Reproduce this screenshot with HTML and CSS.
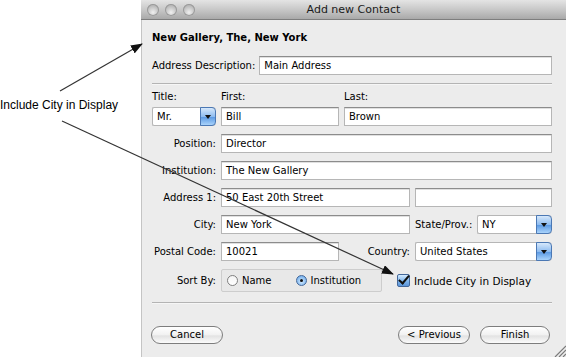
FILE: index.html
```html
<!DOCTYPE html>
<html lang="en">
<head>
  <meta charset="UTF-8">
  <title>Add new Contact</title>
  <link rel="stylesheet" href="styles.css">
</head>
<body>
  <div class="page">
    <aside class="note">Include City in Display</aside>

    <div class="window">
      <div class="titlebar">
        <div class="lights"><i></i><i></i><i></i></div>
        <div class="title">Add new Contact</div>
      </div>

      <div class="content">
        <h1>New Gallery, The, New York</h1>

        <div class="desc-row">
          <span class="lbl">Address Description:</span>
          <div class="field grow">Main Address</div>
        </div>

        <div class="sep"></div>

        <div class="grid heads">
          <span>Title:</span>
          <span>First:</span>
          <span>Last:</span>
        </div>

        <div class="grid rows">
          <div class="popup"><span>Mr.</span><b></b></div>
          <div class="field">Bill</div>
          <div class="field span-3">Brown</div>

          <span class="lbl">Position:</span>
          <div class="field span-4">Director</div>

          <span class="lbl">Institution:</span>
          <div class="field span-4">The New Gallery</div>

          <span class="lbl">Address 1:</span>
          <div class="field span-2">50 East 20th Street</div>
          <div class="field span-2"></div>

          <span class="lbl">City:</span>
          <div class="field span-2">New York</div>
          <span class="lbl">State/Prov.:</span>
          <div class="popup"><span>NY</span><b></b></div>

          <span class="lbl">Postal Code:</span>
          <div class="field">10021</div>
          <span class="lbl">Country:</span>
          <div class="popup span-2"><span>United States</span><b></b></div>
        </div>

        <div class="sort-row">
          <span class="lbl">Sort By:</span>
          <div class="radio-box">
            <span class="radio"><i></i>Name</span>
            <span class="radio on"><i></i>Institution</span>
          </div>
          <span class="check"><i></i>Include City in Display</span>
        </div>

        <div class="sep low"></div>

        <div class="buttons">
          <button class="btn">Cancel</button>
          <div class="btn-group">
            <button class="btn">&lt; Previous</button>
            <button class="btn">Finish</button>
          </div>
        </div>
      </div>
      <svg class="grip" width="12" height="12" viewBox="0 0 12 12">
        <path d="M12 1 L1 12 M12 5 L5 12 M12 9 L9 12" stroke="#7a7a7a" stroke-width="1.2"/>
      </svg>
    </div>

    <!-- annotation arrows drawn over the dialog -->
    <svg class="arrows" width="566" height="357" viewBox="0 0 566 357">
      <defs>
        <marker id="head" markerWidth="12" markerHeight="9" refX="11" refY="4.5" orient="auto" markerUnits="userSpaceOnUse">
          <path d="M0 0 L12 4.5 L0 9 Z" fill="#111"/>
        </marker>
      </defs>
      <line x1="60" y1="91" x2="142" y2="44" stroke="#333" stroke-width="1.2" marker-end="url(#head)"/>
      <line x1="62" y1="121" x2="393" y2="274" stroke="#333" stroke-width="1.2" marker-end="url(#head)"/>
    </svg>
  </div>
</body>
</html>
```

FILE: styles.css
```css
html, body {
  margin: 0;
  padding: 0;
  background: #fff;
}
.page {
  position: relative;
  width: 566px;
  height: 357px;
  display: flex;
  overflow: hidden;
  font-family: "DejaVu Sans", sans-serif;
  font-size: 10px;
  color: #000;
}
.note {
  width: 141px;
  flex: none;
  padding-top: 98px;
  font-family: "Liberation Sans", Arial, sans-serif;
  font-size: 12px;
  line-height: 14px;
  color: #000;
  box-sizing: border-box;
}
.window {
  position: relative;
  flex: 1;
  background: #ececec;
  box-shadow: inset 1px 0 0 #c4c4c4;
  display: flex;
  flex-direction: column;
}
.titlebar {
  height: 19px;
  border-bottom: 1px solid #7e7e7e;
  background: linear-gradient(#e4e4e4, #c8c8c8 50%, #a9a9a9);
  display: flex;
  align-items: center;
  position: relative;
}
.lights {
  display: flex;
  gap: 6px;
  padding-left: 6px;
}
.lights i {
  width: 12px;
  height: 12px;
  border-radius: 50%;
  background: radial-gradient(circle at 50% 70%, #f0f0f0, #bdbdbd 60%, #a0a0a0);
  box-shadow: inset 0 0 0 1px #9a9a9a;
}
.title {
  position: absolute;
  left: 0;
  right: 0;
  text-align: center;
  font-size: 11px;
  color: #1a1a1a;
}
.content {
  padding: 11px 14px 0 11px;
}
h1 {
  margin: 0;
  font-size: 10px;
  font-weight: bold;
  line-height: 14px;
}
.lbl {
  line-height: 19px;
  white-space: nowrap;
}
.desc-row {
  display: flex;
  margin-top: 11px;
  gap: 4px;
}
.grow {
  flex: 1;
}
.field {
  height: 19px;
  box-sizing: border-box;
  background: #fff;
  border: 1px solid #b6b6b6;
  border-top-color: #8c8c8c;
  box-shadow: inset 0 1px 0 #e0e0e0;
  padding-left: 4px;
  line-height: 17px;
  white-space: nowrap;
}
.sep {
  height: 1px;
  background: #b4b4b4;
  border-bottom: 1px solid #f6f6f6;
  margin-top: 8px;
}
.sep.low {
  margin-top: 10px;
}
.grid {
  display: grid;
  grid-template-columns: 64px 118px 66px 57px 75px;
  column-gap: 5px;
}
.heads {
  margin-top: 5px;
  line-height: 14px;
}
.rows {
  margin-top: 3px;
  row-gap: 8px;
}
.rows .lbl {
  text-align: right;
}
.span-2 { grid-column: span 2; }
.span-3 { grid-column: span 3; }
.span-4 { grid-column: span 4; }
.popup {
  height: 19px;
  box-sizing: border-box;
  display: flex;
  background: #fff;
  border: 1px solid #b6b6b6;
  border-right: none;
  border-radius: 2px 4px 4px 2px;
}
.popup span {
  flex: 1;
  padding-left: 4px;
  line-height: 17px;
}
.popup b {
  width: 14px;
  margin: -1px 0;
  border-radius: 0 4px 4px 0;
  border: 1px solid #4b78b4;
  background: linear-gradient(#d6e8fb, #8ebcf0 50%, #5d9be4 55%, #a9d3fb);
  position: relative;
}
.popup b::after {
  content: "";
  position: absolute;
  left: 4px;
  top: 7px;
  border-left: 3px solid transparent;
  border-right: 3px solid transparent;
  border-top: 4px solid #111;
}
.sort-row {
  display: flex;
  align-items: center;
  margin-top: 8px;
}
.sort-row .lbl {
  width: 64px;
  text-align: right;
  margin-right: 5px;
}
.radio-box {
  width: 161px;
  height: 23px;
  box-sizing: border-box;
  border: 1px solid #cdcdcd;
  border-radius: 2px;
  background: #e8e8e8;
  display: flex;
  align-items: center;
  padding-left: 5px;
  gap: 24px;
}
.radio, .check {
  display: flex;
  align-items: center;
  gap: 4px;
}
.radio i {
  width: 11px;
  height: 11px;
  border-radius: 50%;
  box-sizing: border-box;
  border: 1px solid #7f7f7f;
  background: linear-gradient(#f4f4f4, #fff);
  position: relative;
}
.radio.on i {
  border-color: #44689a;
  background: radial-gradient(circle at 50% 60%, #d6ecff, #7fb6ee 70%, #5b94d8);
}
.radio.on i::after {
  content: "";
  position: absolute;
  left: 3px;
  top: 3px;
  width: 3px;
  height: 3px;
  border-radius: 50%;
  background: #111;
}
.check {
  margin-left: 15px;
  font-size: 10.5px;
}
.check i {
  width: 11px;
  height: 11px;
  border: 1px solid #44689a;
  border-radius: 2px;
  background: linear-gradient(#d6ecff, #7fb6ee 55%, #5b94d8);
  position: relative;
}
.check i::after {
  content: "";
  position: absolute;
  left: 3px;
  top: -2px;
  width: 4px;
  height: 9px;
  border-right: 2px solid #111;
  border-bottom: 2px solid #111;
  transform: rotate(40deg);
}
.buttons {
  display: flex;
  justify-content: space-between;
  margin: 22px 2px 0 -1px;
}
.btn-group {
  display: flex;
  gap: 10px;
}
.btn {
  height: 18px;
  width: 70px;
  padding: 0;
  border: 1px solid #7d7d7d;
  border-radius: 9px;
  background: linear-gradient(#ffffff, #f1f1f1 50%, #e2e2e2 55%, #fbfbfb);
  font-family: "DejaVu Sans", sans-serif;
  font-size: 10px;
  color: #000;
  line-height: 16px;
}
.btn:first-child {
  width: 72px;
}
.grip {
  position: absolute;
  right: 0;
  bottom: 0;
}
.arrows {
  position: absolute;
  left: 0;
  top: 0;
  pointer-events: none;
}
```
